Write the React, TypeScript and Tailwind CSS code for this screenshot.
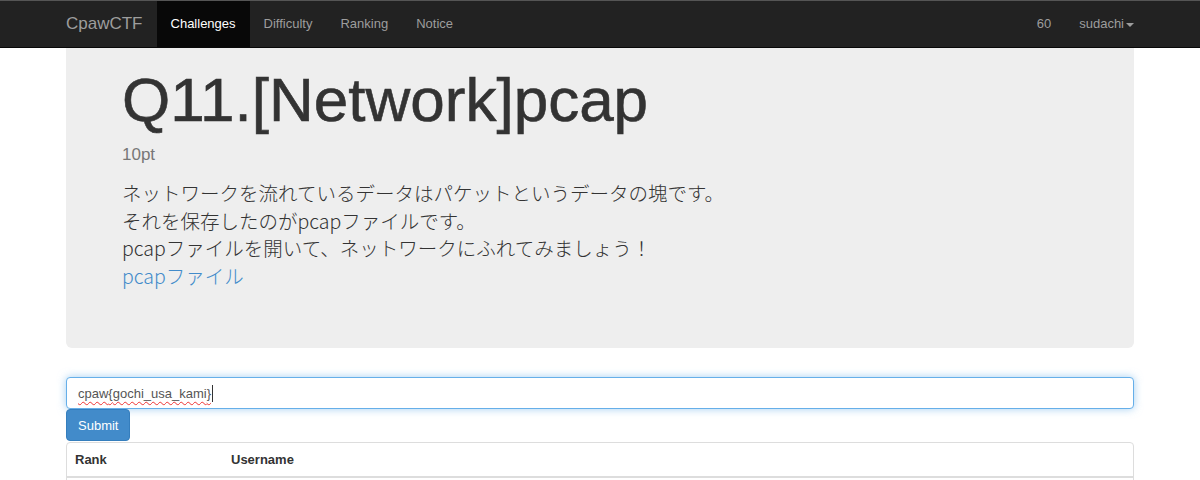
const sans = "font-['Helvetica_Neue','Liberation_Sans','Noto_Sans_CJK_JP',sans-serif]";

function Navbar() {
  return (
    <nav className="h-[48px] bg-[#222] border-t border-t-[#555] border-b border-b-[#080808]">
      <div className="ml-[52px] mr-[52px] flex h-full items-stretch">
        <a className="flex items-center px-[14px] text-[17px] text-[#9d9d9d]">CpawCTF</a>
        <a className="flex items-center px-[14px] text-[13px] text-white bg-[#080808]">Challenges</a>
        <a className="flex items-center px-[14px] text-[13px] text-[#9d9d9d]">Difficulty</a>
        <a className="flex items-center px-[14px] text-[13px] text-[#9d9d9d]">Ranking</a>
        <a className="flex items-center px-[14px] text-[13px] text-[#9d9d9d]">Notice</a>
        <div className="flex-1" />
        <a className="flex items-center pl-[11px] pr-[14px] text-[13px] text-[#9d9d9d]">60</a>
        <a className="flex items-center px-[14px] text-[13px] text-[#9d9d9d]">
          sudachi
          <span className="ml-[2px] mt-[2px] border-x-[4px] border-x-transparent border-t-[4px] border-t-[#9d9d9d]" />
        </a>
      </div>
    </nav>
  );
}

export default function App() {
  return (
    <div className={`${sans} min-h-[480px] bg-white text-[#333]`}>
      <Navbar />
      <div className="mx-[66px] w-[1068px]">
        <div className="rounded-b-[6px] bg-[#eee] pl-[56px] pt-[18px] pb-[59px]">
          <h1 className="text-[62px] leading-[68px] text-[#333] [-webkit-text-stroke:0.6px_#333]">Q11.[Network]pcap</h1>
          <div className="mt-[9px] text-[17px] leading-[24px] font-light text-[#777]">10pt</div>
          <p className="mt-[12px] font-['Noto_Sans_CJK_JP',sans-serif] text-[19.5px] leading-[27.6px] font-light text-[#333]">
            ネットワークを流れているデータはパケットというデータの塊です。
            <br />
            それを保存したのがpcapファイルです。
            <br />
            pcapファイルを開いて、ネットワークにふれてみましょう！
            <br />
            <a className="text-[#428bca]">pcapファイル</a>
          </p>
        </div>

        <div className="mt-[29px] flex h-[32px] items-center rounded-[4px] border border-[#66afe9] bg-white px-[11px] text-[13px] text-[#555] shadow-[0_0_8px_rgba(102,175,233,0.6)]">
          <span className="underline decoration-wavy decoration-[#e33] decoration-1 underline-offset-[3px]">cpaw{"{"}gochi_usa_kami{"}"}</span>
          <span className="ml-[1px] h-[17px] w-px bg-[#333]" />
        </div>
        <button className="flex h-[32px] items-center rounded-[4px] border border-[#357ebd] bg-[#428bca] px-[11px] text-[13px] text-white">
          Submit
        </button>

        <div className="mt-px rounded-t-[4px] border border-[#ddd]">
          <div className="flex h-[35px] items-center border-b-2 border-b-[#ddd] px-[8px] text-[13px] font-bold text-[#333]">
            <div className="w-[156px]">Rank</div>
            <div>Username</div>
          </div>
          <div className="h-[30px]" />
        </div>
      </div>
    </div>
  );
}
